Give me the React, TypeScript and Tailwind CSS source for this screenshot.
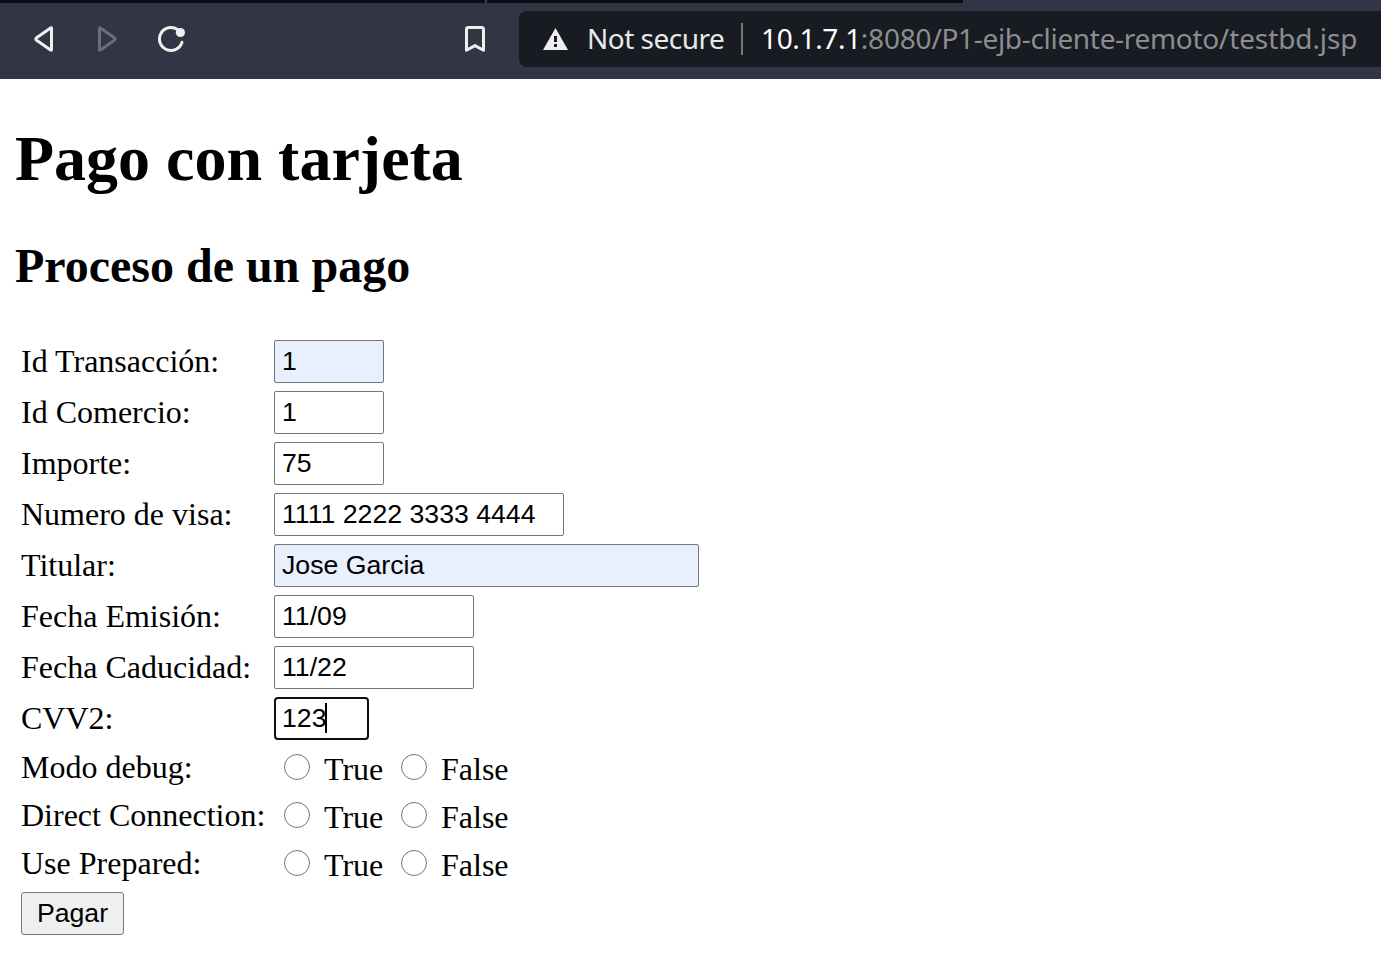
import type { ReactNode } from "react";

const fields = [
  { label: "Id Transacción:", value: "1", size: "w-[110px]", look: "bg-[#e8f0fe] border border-[#767676]" },
  { label: "Id Comercio:", value: "1", size: "w-[110px]", look: "bg-white border border-[#767676]" },
  { label: "Importe:", value: "75", size: "w-[110px]", look: "bg-white border border-[#767676]" },
  { label: "Numero de visa:", value: "1111 2222 3333 4444", size: "w-[290px]", look: "bg-white border border-[#767676]" },
  { label: "Titular:", value: "Jose Garcia", size: "w-[425px]", look: "bg-[#e8f0fe] border border-[#767676]" },
  { label: "Fecha Emisión:", value: "11/09", size: "w-[200px]", look: "bg-white border border-[#767676]" },
  { label: "Fecha Caducidad:", value: "11/22", size: "w-[200px]", look: "bg-white border border-[#767676]" },
];

const options = ["Modo debug:", "Direct Connection:", "Use Prepared:"];

function Row({ label, height, children }: { label: string; height: string; children: ReactNode }) {
  return (
    <div className={`flex items-center ${height}`}>
      <div className="w-[253px] shrink-0 whitespace-nowrap leading-[37px]">{label}</div>
      {children}
    </div>
  );
}

function Toolbar() {
  return (
    <header className="flex h-[79px] flex-col bg-[#323544]">
      <div className="flex h-[3px] w-[963px] bg-[#0c0d15]">
        <div className="ml-[485px] w-[2px] bg-[#414042]" />
      </div>
      <div className="flex h-[76px] pt-2">
        <svg width="519" height="56" viewBox="0 11 519 56" fill="none" strokeWidth="3" strokeLinejoin="round" strokeLinecap="round" className="shrink-0">
          <path d="M51.5 28.2V49.8Q51.5 50.7 50.6 50.1L36.2 40Q35.3 39 36.2 38L50.6 27.9Q51.5 27.3 51.5 28.2Z" stroke="#efefef" />
          <path d="M99.5 28.2V49.8Q99.5 50.7 100.4 50.1L114.8 40Q115.7 39 114.8 38L100.4 27.9Q99.5 27.3 99.5 28.2Z" stroke="#6b6d77" />
          <path d="M177.5 29.5A11.5 11.5 0 1 0 182 42.3" stroke="#efefef" />
          <circle cx="180.4" cy="32.5" r="4.6" fill="#efefef" />
          <path d="M468.4 27.5H481.6Q483.5 27.5 483.5 29.4V50.3L475 45.6L466.5 50.3V29.4Q466.5 27.5 468.4 27.5Z" stroke="#efefef" />
        </svg>
        <div className="flex h-14 w-[862px] shrink-0 items-center overflow-hidden rounded-l-lg bg-[#191b22] pl-6 font-['Noto_Sans',sans-serif] text-[28px] leading-[38px] whitespace-nowrap">
          <svg width="25" height="22" viewBox="0 0 25 22" className="shrink-0">
            <path d="M12.5 0L25 22H0Z" fill="#efefef" />
            <path d="M11 8H14V14H11ZM11 16H14V19H11Z" fill="#191b22" />
          </svg>
          <span className="ml-[19px] w-[154px] shrink-0 pb-[2px] tracking-[-0.5px] text-[#e8e9ea]">Not secure</span>
          <span className="h-8 w-[2px] shrink-0 bg-[#77787a]" />
          <span className="ml-[18px] pb-[2px] text-[#8c8d90]">
            <span className="tracking-[-0.35px] text-white">10.1.7.1</span>
            <span className="tracking-[-0.2px]">:8080</span>
            <span className="tracking-[-0.32px]">/P1-ejb-cliente-remoto</span>
            <span className="tracking-[-0.1px]">/testbd.jsp</span>
          </span>
        </div>
      </div>
    </header>
  );
}

export default function App() {
  return (
    <div className="h-[957px] w-[1381px] overflow-hidden bg-white text-black">
      <Toolbar />
      <main className="font-['Liberation_Serif',serif] text-[32px]">
        <h1 className="ml-[15px] pt-[43px] text-[64px] leading-[74px] font-bold">Pago con tarjeta</h1>
        <h2 className="mt-[42px] ml-[15px] text-[48px] leading-[55px] font-bold">Proceso de un pago</h2>
        <form className="mt-[43px] ml-[21px] flex flex-col">
          {fields.map((f) => (
            <Row key={f.label} label={f.label} height="h-[51px]">
              <div className={`flex h-[43px] items-center rounded-[2px] pl-[7px] font-['Liberation_Sans',sans-serif] text-[26.667px] leading-[31px] ${f.size} ${f.look}`}>{f.value}</div>
            </Row>
          ))}
          <Row label="CVV2:" height="h-[51px]">
            <div className="flex h-[43px] w-[95px] items-center rounded-[4px] border-2 border-[#101010] bg-white pl-[6px] font-['Liberation_Sans',sans-serif] text-[26.667px] leading-[31px]">
              123
              <span className="mb-[2px] -ml-px h-[30px] w-[2px] bg-black" />
            </div>
          </Row>
          {options.map((label) => (
            <Row key={label} label={label} height="h-12 pb-[2px]">
              <span className="ml-[10px] h-[26px] w-[26px] rounded-full border border-[#767676]" />
              <span className="mt-1 ml-[14px] w-[77px] leading-[37px]">True</span>
              <span className="h-[26px] w-[26px] rounded-full border border-[#767676]" />
              <span className="mt-1 ml-[14px] leading-[37px]">False</span>
            </Row>
          ))}
          <button type="button" className="mt-1 flex h-[43px] w-[103px] items-center justify-center rounded-[3px] border border-[#767676] bg-[#efefef] font-['Liberation_Sans',sans-serif] text-[26.667px] leading-[31px]">
            Pagar
          </button>
        </form>
      </main>
    </div>
  );
}
